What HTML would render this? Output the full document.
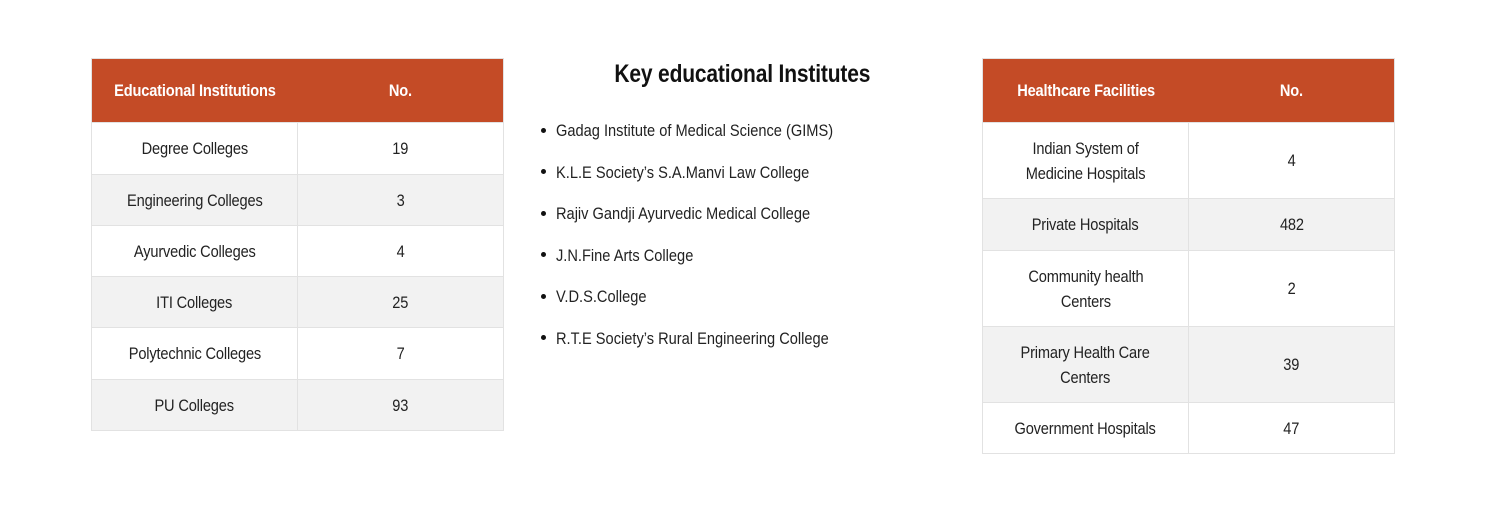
<!DOCTYPE html>
<html><head><meta charset="utf-8"><style>
*{margin:0;padding:0;box-sizing:border-box}
body{width:1487px;height:506px;background:#fff;font-family:"Liberation Sans",sans-serif;color:#222;position:relative;overflow:hidden}
table{position:absolute;border-collapse:collapse;width:413px;top:58px;border:1px solid #e2e2e2}
th{background:#c44b26;color:#fff;height:64px;font-size:17px;font-weight:bold;text-align:center}
td{text-align:center;font-size:17px;border:1px solid #e2e2e2;line-height:25px}
tr.g td{background:#f2f2f2}
.s{display:inline-block;transform:scaleX(.86);letter-spacing:-.2px}
td:first-child,th:first-child{width:206px}
h2{position:absolute;top:60px;left:560px;width:364px;text-align:center;font-size:25px;font-weight:bold;color:#111}
h2 .s{transform:scaleX(.84)}
ul{position:absolute;left:541px;top:121px;list-style:none}
li{height:41.5px;font-size:17px;white-space:nowrap}
li:before{content:"";display:inline-block;width:5px;height:5px;border-radius:50%;background:#111;vertical-align:middle;margin-right:10px;margin-top:-3px}
li span{display:inline-block;transform:scaleX(.86);transform-origin:left}
</style></head><body>
<table style="left:91px">
<tr><th><span class="s">Educational Institutions</span></th><th><span class="s">No.</span></th></tr>
<tr style="height:52px"><td><span class="s">Degree Colleges</span></td><td><span class="s">19</span></td></tr>
<tr class="g" style="height:51px"><td><span class="s">Engineering Colleges</span></td><td><span class="s">3</span></td></tr>
<tr style="height:51px"><td><span class="s">Ayurvedic Colleges</span></td><td><span class="s">4</span></td></tr>
<tr class="g" style="height:51px"><td><span class="s">ITI Colleges</span></td><td><span class="s">25</span></td></tr>
<tr style="height:52px"><td><span class="s">Polytechnic Colleges</span></td><td><span class="s">7</span></td></tr>
<tr class="g" style="height:51px"><td><span class="s">PU Colleges</span></td><td><span class="s">93</span></td></tr>
</table>
<h2><span class="s">Key educational Institutes</span></h2>
<ul>
<li><span>Gadag Institute of Medical Science (GIMS)</span></li>
<li><span>K.L.E Society’s S.A.Manvi Law College</span></li>
<li><span>Rajiv Gandji Ayurvedic Medical College</span></li>
<li><span>J.N.Fine Arts College</span></li>
<li><span>V.D.S.College</span></li>
<li><span>R.T.E Society’s Rural Engineering College</span></li>
</ul>
<table style="left:982px">
<tr><th><span class="s">Healthcare Facilities</span></th><th><span class="s">No.</span></th></tr>
<tr style="height:76px"><td><span class="s">Indian System of<br>Medicine Hospitals</span></td><td><span class="s">4</span></td></tr>
<tr class="g" style="height:52px"><td><span class="s">Private Hospitals</span></td><td><span class="s">482</span></td></tr>
<tr style="height:76px"><td><span class="s">Community health<br>Centers</span></td><td><span class="s">2</span></td></tr>
<tr class="g" style="height:76px"><td><span class="s">Primary Health Care<br>Centers</span></td><td><span class="s">39</span></td></tr>
<tr style="height:51px"><td><span class="s">Government Hospitals</span></td><td><span class="s">47</span></td></tr>
</table>
</body></html>
